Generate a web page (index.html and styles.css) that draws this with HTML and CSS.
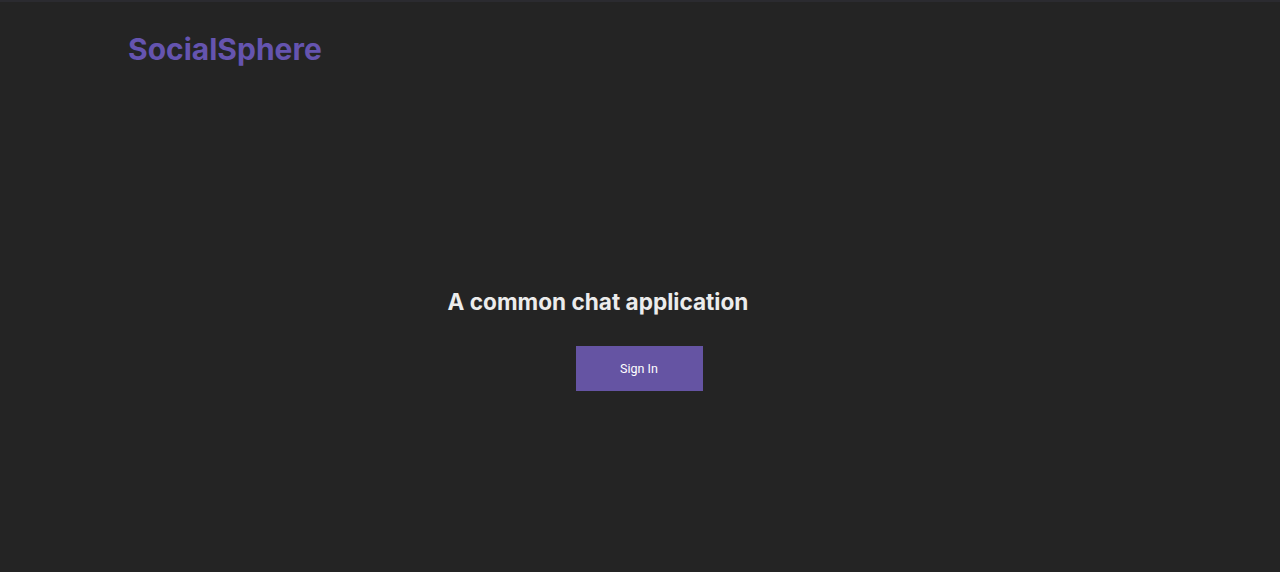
FILE: index.html
```html
<!DOCTYPE html>
<html lang="en">
<head>
    <meta charset="UTF-8">
    <meta name="viewport" content="width=device-width, initial-scale=1.0">
    <title>SocialSphere</title>
    <link rel="stylesheet" href="styles.css">
</head>
<body>
    <header class="topbar">
        <a class="logo" href="#">SocialSphere</a>
    </header>

    <main class="hero">
        <h1 class="hero-title">A common chat application</h1>
        <button class="signin-btn" type="button">Sign In</button>
    </main>
</body>
</html>
```

FILE: styles.css
```css
/* Base */
html, body {
    height: 100%;
}

body {
    margin: 0;
    background-color: #242424;
    border-top: 2px solid #2b2b30;
    font-family: 'Inter', 'Noto Sans', sans-serif;
    color: #e8e8e8;
    display: flex;
    flex-direction: column;
    box-sizing: border-box;
}

/* Header with brand */
.topbar {
    padding: 29px 128px 0;
}

.logo {
    font-size: 30px;
    font-weight: 700;
    color: #6554af;
    text-decoration: none;
}

/* Center block */
.hero {
    flex: 1;
    display: flex;
    flex-direction: column;
    align-items: center;
    padding-top: 221px;
}

.hero-title {
    margin: 0 84px 0 0;
    font-size: 22.6px;
    font-weight: 700;
    color: #ececec;
}

.signin-btn {
    margin: 31px 2px 0 0;
    width: 127px;
    height: 45px;
    border: none;
    background-color: #6554a3;
    color: #fff;
    font-family: 'Roboto', sans-serif;
    font-size: 12.5px;
    cursor: pointer;
}

.signin-btn:hover {
    background-color: #7363b3;
}
```
